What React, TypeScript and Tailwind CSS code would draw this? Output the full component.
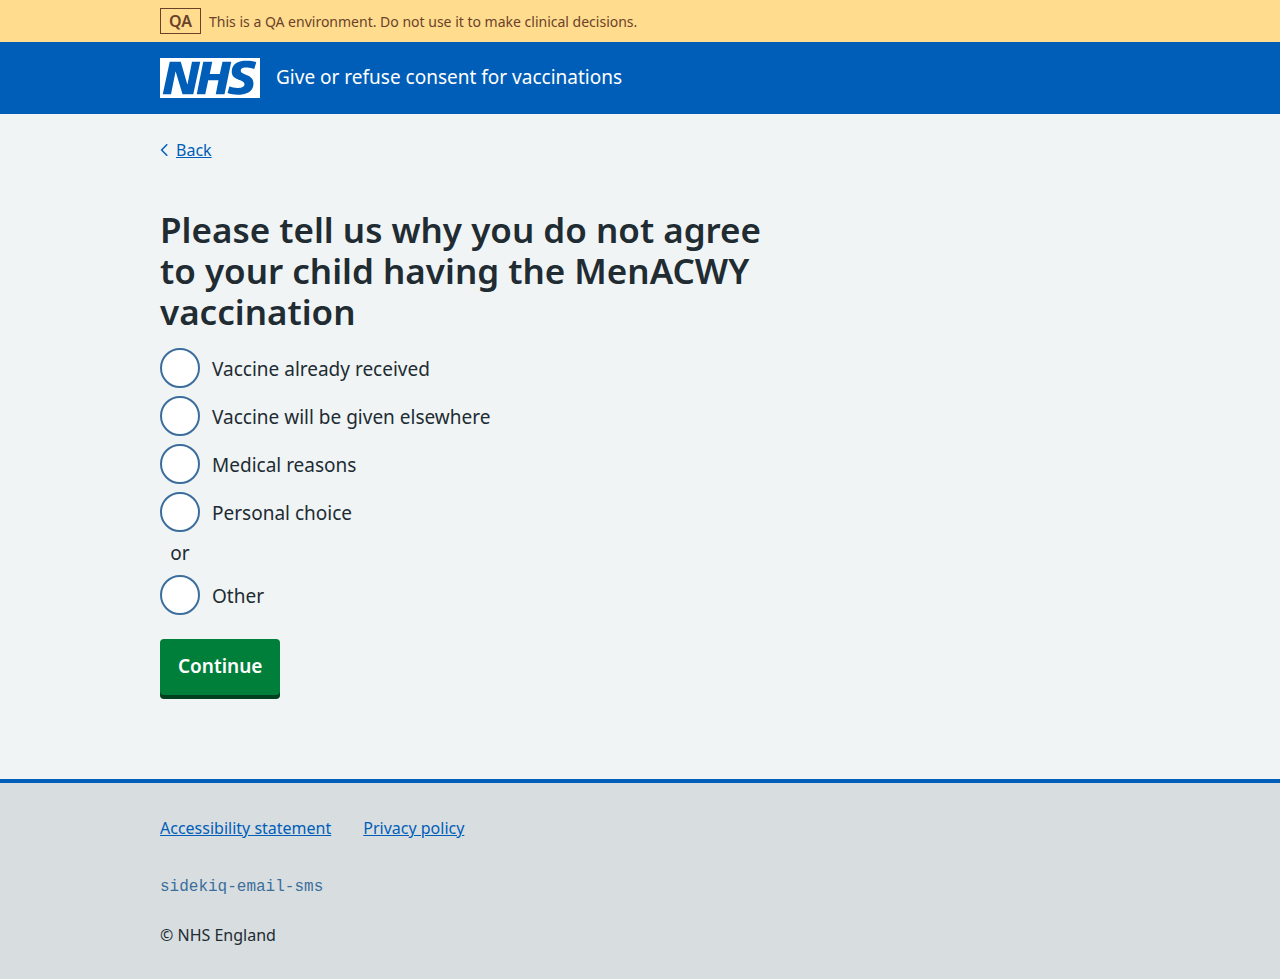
import React from "react";

const reasons = [
  { id: "already-received", label: "Vaccine already received" },
  { id: "given-elsewhere", label: "Vaccine will be given elsewhere" },
  { id: "medical", label: "Medical reasons" },
  { id: "personal", label: "Personal choice" },
];

function Container({ children }: { children: React.ReactNode }) {
  return <div className="mx-8 max-w-[960px] min-[1024px]:mx-auto">{children}</div>;
}

function Radio({ id, label }: { id: string; label: string }) {
  return (
    <div className="flex items-center gap-3">
      <input
        type="radio"
        id={id}
        name="reason"
        value={id}
        className="size-10 shrink-0 appearance-none rounded-full border-2 border-[#3b6e9c] bg-white checked:bg-[#212b32] checked:shadow-[inset_0_0_0_8px_#fff]"
      />
      <label htmlFor={id} className="pt-[2px] leading-7">
        {label}
      </label>
    </div>
  );
}

function NhsLogo() {
  return (
    <svg role="img" aria-label="NHS" viewBox="0 0 200 80" className="h-10 w-[100px] shrink-0 text-white">
      <path
        fill="currentColor"
        d="M200 0v80H0V0h200Zm-27.5 5.5c-14.5 0-29 5-29 22 0 10.2 7.7 13.5 14.7 16.3l.7.3c5.4 2 10.1 3.9 10.1 8.4 0 6.5-8.5 7.5-14 7.5s-12.5-1.5-16-3.5L135 70c5.5 2 13.5 3.5 20 3.5 15.5 0 32-4.5 32-22.5 0-19.5-25.5-16.5-25.5-25.5 0-5.5 5.5-6.5 12.5-6.5a35 35 0 0 1 14.5 3l4-13.5c-4.5-2-12-3-20-3Zm-131 2h-22l-14 65H22l9-45h.5l13.5 45h21.5l14-65H64l-9 45h-.5l-13-45Zm63 0h-18l-13 65h17l6-28H117l-5.5 28H129l13.5-65H125L119.5 32h-20l5-24.5Z"
      />
    </svg>
  );
}

export default function App() {
  return (
    <div className="flex min-h-screen flex-col bg-[#d8dde0] font-['Noto_Sans','Open_Sans',sans-serif] text-[19px] text-[#212b32]">
      <div className="bg-[#ffdc8e] py-2 text-[#6a4229]">
        <Container>
          <div className="flex items-center gap-2 text-sm leading-6">
            <strong className="border border-[#6a4229] px-2 text-base leading-6 font-semibold">QA</strong>
            <span className="pt-[2px]">This is a QA environment. Do not use it to make clinical decisions.</span>
          </div>
        </Container>
      </div>

      <header className="bg-[#005eb8] py-4 text-white">
        <Container>
          <a href="#" className="flex items-center gap-4">
            <NhsLogo />
            <span className="pb-[2px] leading-7">Give or refuse consent for vaccinations</span>
          </a>
        </Container>
      </header>

      <div className="bg-[#f0f4f5] pt-6 pb-[84px]">
        <Container>
          <a href="#" className="flex w-fit items-center gap-2 text-base leading-6 text-[#005eb8]">
            <svg viewBox="0 0 8 12" className="h-3 w-2" fill="none" stroke="currentColor" strokeWidth="1.5" aria-hidden="true">
              <path d="M6.8 0.7 1.6 6l5.2 5.3" strokeLinecap="round" strokeLinejoin="round" />
            </svg>
            <span className="underline">Back</span>
          </a>
          <main className="max-w-[624px] pt-[47px]">
            <form>
              <fieldset>
                <legend className="mb-4">
                  <h1 className="text-[35px] leading-[41px] font-semibold">
                    Please tell us why you do not agree to your child having the MenACWY vaccination
                  </h1>
                </legend>
                <div className="flex flex-col gap-2">
                  {reasons.map((reason) => (
                    <Radio key={reason.id} id={reason.id} label={reason.label} />
                  ))}
                  <div className="w-10 text-center leading-[27px]">or</div>
                  <Radio id="other" label="Other" />
                </div>
              </fieldset>
              <button
                type="button"
                className="mt-6 block rounded-[4px] bg-[#007f3b] px-[18px] pt-[13px] pb-[15px] leading-7 font-semibold text-white shadow-[0_4px_0_#00401e]"
              >
                Continue
              </button>
            </form>
          </main>
        </Container>
      </div>

      <footer className="border-t-4 border-[#005eb8] pt-[33px] pb-8 text-base leading-6">
        <Container>
          <ul className="flex flex-wrap gap-x-8">
            <li>
              <a href="#" className="text-[#005eb8] underline">Accessibility statement</a>
            </li>
            <li>
              <a href="#" className="text-[#005eb8] underline">Privacy policy</a>
            </li>
          </ul>
          <p className="mt-[35px] font-['Liberation_Mono',monospace] text-[#3b6e9c]">sidekiq-email-sms</p>
          <p className="mt-6">© NHS England</p>
        </Container>
      </footer>
    </div>
  );
}
